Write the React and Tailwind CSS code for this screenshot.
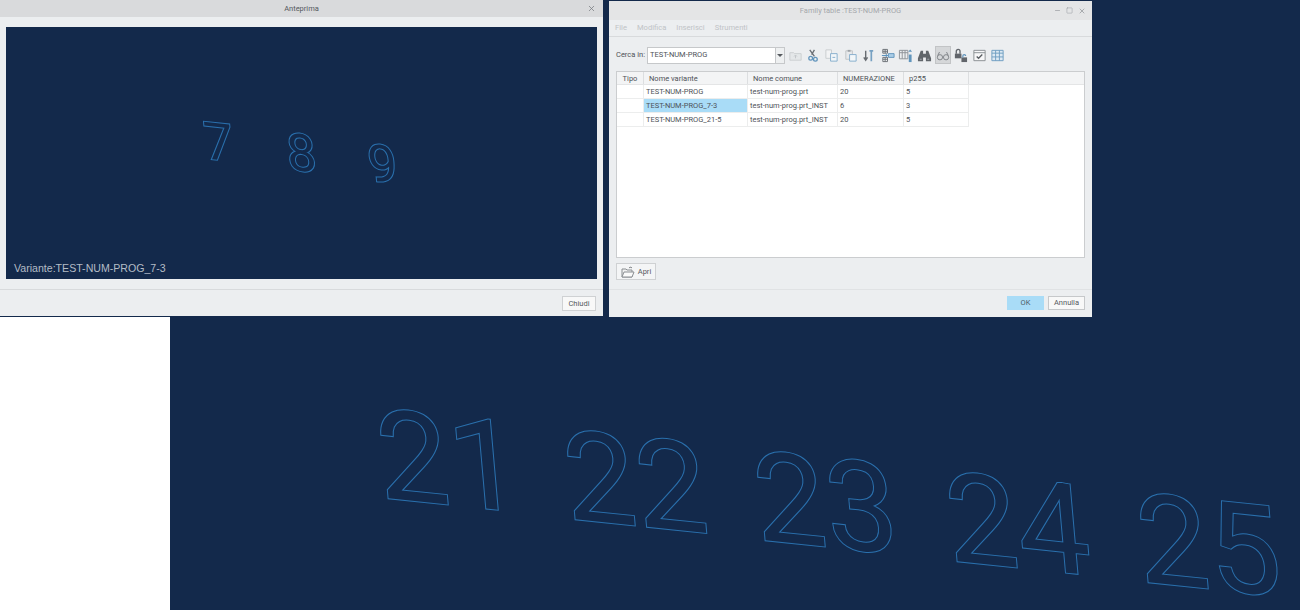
import { X, Minus, Square } from "lucide-react";

// paint-order hides the inner half of the stroke, only the outline stays visible
const outlineBig = "absolute leading-[0.8] whitespace-nowrap text-[126px] font-normal skew-x-[5deg] skew-y-[6deg] text-[#13294b] [paint-order:stroke_fill] [-webkit-text-stroke:2px_#2a70ad] font-['Roboto',sans-serif]";
const outlineSmall = "absolute leading-none text-[52px] font-normal skew-x-[5deg] skew-y-[6deg] text-[#13294b] [paint-order:stroke_fill] [-webkit-text-stroke:2px_#2a70ad] font-['Roboto',sans-serif]";

const columns = ["w-[27px]", "w-[104px]", "w-[90px]", "w-[66px]", "w-[65px]"];

const rows = [
  ["TEST-NUM-PROG", "test-num-prog.prt", "20", "5"],
  ["TEST-NUM-PROG_7-3", "test-num-prog.prt_INST", "6", "3"],
  ["TEST-NUM-PROG_21-5", "test-num-prog.prt_INST", "20", "5"],
];

// toolbar drawings, 16x16
const ToolIcon = ({ children, active }) => (
  <div className={`flex h-[18px] w-4 items-center justify-center ${active ? "bg-[#d5d7d9] border border-[#c2c4c6]" : ""}`}>
    <svg width="15" height="15" viewBox="0 0 16 16" fill="none" className="opacity-80">{children}</svg>
  </div>
);

const Toolbar = () => (
  <div className="ml-[2px] flex items-center gap-[2.450px]">
    <ToolIcon>
      <path d="M2 5h4l1 1h7v7H2z" fill="#e3e6e8" stroke="#c3c7ca" />
      <path d="M8 11V8M6.500 9L8 7.500 9.500 9" stroke="#b5babe" />
    </ToolIcon>
    <ToolIcon>
      <path d="M4 2l5 7M9 2L6 7" stroke="#4a5057" strokeWidth="1.400" />
      <circle cx="5" cy="11" r="2" stroke="#3f7fb0" strokeWidth="1.400" />
      <circle cx="10" cy="12" r="2" stroke="#3f7fb0" strokeWidth="1.400" />
    </ToolIcon>
    <ToolIcon>
      <path d="M2 2h6v9H2z" fill="#f4f5f6" stroke="#c0c4c7" />
      <path d="M7 6h7v8H7z" fill="#f4f8fb" stroke="#6c9ec4" />
      <path d="M9 10h3" stroke="#6c9ec4" />
    </ToolIcon>
    <ToolIcon>
      <path d="M3 3h7v9H3z" fill="#e6e8ea" stroke="#b6babd" />
      <path d="M5 2h3v2H5z" fill="#8b9095" />
      <path d="M7 7h7v7H7z" fill="#f4f8fb" stroke="#6c9ec4" />
    </ToolIcon>
    <ToolIcon>
      <path d="M5 3v10M3 10l2 3 2-3" stroke="#474c52" strokeWidth="1.500" />
      <path d="M11 14V3M9 3h4" stroke="#5b8fb8" strokeWidth="1.800" />
    </ToolIcon>
    <ToolIcon>
      <path d="M3 1.500h5v4H3zM3 10h5v4.500H3zM3 3.500h5M5.500 1.500v4M3 12h5M5.500 10v4.500" stroke="#4c5157" />
      <path d="M9 6h6v4H9z" fill="#9cc7e6" stroke="#3f7fb0" />
      <path d="M2 8h6M6 6.500L8 8l-2 1.500" stroke="#2f75ad" />
    </ToolIcon>
    <ToolIcon>
      <path d="M1.500 2.500h9v9h-9zM4.500 2.500v9M7.500 2.500v9M1.500 5h9" stroke="#777c82" />
      <path d="M13 7v8" stroke="#3f7fb0" strokeWidth="3" />
      <path d="M11 4l2-2.500L15 4z" fill="#3f7fb0" />
    </ToolIcon>
    <ToolIcon>
      <path d="M4 3h2.500v3h3V3H12l3 8v3H9.500v-4h-3v4H1v-3z" fill="#3e4349" />
      <path d="M3 12h2M11 12h2" stroke="#9a9fa4" />
    </ToolIcon>
    <ToolIcon active>
      <circle cx="4.500" cy="10" r="3" stroke="#62676d" />
      <circle cx="11.500" cy="10" r="3" stroke="#62676d" />
      <path d="M7.500 10h1M2 8l2-4M14 8l-2-4" stroke="#62676d" />
    </ToolIcon>
    <ToolIcon>
      <path d="M2 6h7v5H2z" fill="#3f444a" />
      <path d="M3.500 6V3.500a2 2 0 0 1 4 0V6" stroke="#3f444a" strokeWidth="1.400" />
      <path d="M9 10h6v5H9z" fill="#3f444a" />
      <path d="M10.500 10V8.500a1.500 1.500 0 0 1 3 0" stroke="#3f7fb0" strokeWidth="1.300" />
    </ToolIcon>
    <ToolIcon>
      <path d="M2 2.500h12v11H2z" fill="#fafafa" stroke="#72777c" />
      <path d="M2 5h12" stroke="#72777c" />
      <path d="M5 9l2 2 4-4" stroke="#34393e" strokeWidth="1.400" />
    </ToolIcon>
    <ToolIcon>
      <path d="M2 2.500h12v11H2z" fill="#d9e9f4" stroke="#4f8ab6" />
      <path d="M2 5.500h12M6 2.500v11M10 2.500v11M2 9.500h12" stroke="#4f8ab6" />
    </ToolIcon>
  </div>
);

const PreviewWindow = () => (
  <div className="flex h-[316px] w-[603px] shrink-0 flex-col bg-[#eceef0]">
    <div className="relative flex h-[17px] shrink-0 items-center justify-center bg-[#d9dadc] text-[7.500px] text-[#55595e]">
      Anteprima
      <X size={9} strokeWidth={2} className="absolute right-[7px] text-[#777b80]" />
    </div>
    <div className="px-[6px] pt-[10px]">
      <div className="relative h-[252px] overflow-hidden bg-[#13294b]">
        <span className={`${outlineSmall} left-[198px] top-[90px]`}>7</span>
        <span className={`${outlineSmall} left-[281px] top-[101px]`}>8</span>
        <span className={`${outlineSmall} left-[362px] top-[112px]`}>9</span>
        <span className="absolute bottom-[3px] left-[8px] font-['Liberation_Sans',sans-serif] text-[10.600px] leading-[15px] text-[#b4bcc6]">
          Variante:TEST-NUM-PROG_7-3
        </span>
      </div>
    </div>
    <div className="mt-[10px] flex flex-1 items-start justify-end border-t border-[#d8dadc] pr-[7px] pt-[6px]">
      <button className="h-[15px] w-[34px] border border-[#cfd1d3] bg-[#f8f8f8] text-[7.500px] leading-none text-[#55595e]">Chiudi</button>
    </div>
  </div>
);

const FamilyWindow = () => (
  <div className="mt-px ml-[6px] flex h-[316px] w-[483px] shrink-0 flex-col bg-[#eceef0]">
    <div className="relative flex h-[19px] shrink-0 items-center justify-center bg-[#e4e5e6] text-[7.500px] text-[#a4a8ac]">
      Family table :TEST-NUM-PROG
      <div className="absolute right-[6px] flex items-center gap-[5px] text-[#8a8e92]">
        <Minus size={7} strokeWidth={2} />
        <Square size={7} strokeWidth={1.500} />
        <X size={8} strokeWidth={2} />
      </div>
    </div>
    <div className="flex h-[17px] shrink-0 items-center gap-[10px] border-b border-[#d8dadc] pl-[6px] text-[7.600px] text-[#c0c3c6]">
      <span>File</span>
      <span>Modifica</span>
      <span>Inserisci</span>
      <span>Strumenti</span>
    </div>
    <div className="flex h-[18px] mt-[9px] shrink-0 items-center pl-[7px]">
      <span className="w-[31px] whitespace-nowrap text-[7.500px] text-[#4e5257]">Cerca in:</span>
      <div className="flex h-[17px] w-[138px] items-center justify-between border border-[#c6c8ca] bg-white pl-[2px] text-[7.500px] text-[#4e5257]">
        TEST-NUM-PROG
        <div className="flex h-full w-[9px] items-center justify-center border-l border-[#c6c8ca] bg-[#eef0f1]">
          <div className="h-0 w-0 border-x-[3px] border-t-[3px] border-x-transparent border-t-[#55595e]" />
        </div>
      </div>
      <Toolbar />
    </div>
    <div className="mx-[7px] mt-[7px] h-[187px] shrink-0 border border-[#cbcdcf] bg-white text-[7.500px] text-[#4e5257]">
      <div className="flex h-[13px] items-center whitespace-nowrap border-b border-[#e4e5e6] bg-[#f3f4f5]">
        <div className={`${columns[0]} h-full border-r border-[#dcdee0] text-center leading-[13px]`}>Tipo</div>
        <div className={`${columns[1]} h-full border-r border-[#dcdee0] pl-[5px] leading-[13px]`}>Nome variante</div>
        <div className={`${columns[2]} h-full border-r border-[#dcdee0] pl-[5px] leading-[13px]`}>Nome comune</div>
        <div className={`${columns[3]} h-full border-r border-[#dcdee0] pl-[5px] leading-[13px]`}>NUMERAZIONE</div>
        <div className={`${columns[4]} h-full border-r border-[#dcdee0] pl-[5px] leading-[13px]`}>p255</div>
      </div>
      {rows.map((row, i) => (
        <div key={row[0]} className="flex h-[14px] w-[352px] whitespace-nowrap border-b border-[#eceded]">
          <div className={`${columns[0]} border-r border-[#eceded]`} />
          <div className={`${columns[1]} border-r border-[#eceded] pl-[2px] leading-[13px] ${i === 1 ? "bg-[#a9dcf7]" : ""}`}>{row[0]}</div>
          <div className={`${columns[2]} border-r border-[#eceded] pl-[2px] leading-[13px]`}>{row[1]}</div>
          <div className={`${columns[3]} border-r border-[#eceded] pl-[2px] leading-[13px]`}>{row[2]}</div>
          <div className={`${columns[4]} border-r border-[#eceded] pl-[2px] leading-[13px]`}>{row[3]}</div>
        </div>
      ))}
    </div>
    <div className="ml-[7px] mt-[5px] flex h-[17px] w-[40px] shrink-0 items-center justify-center gap-[3px] border border-[#cfd1d3] bg-[#f4f5f6] text-[7.500px] text-[#55595e]">
      <svg width="14" height="12" viewBox="0 0 14 12" fill="none">
        <path d="M1 3h4l1 1h5v7H1z" fill="#f0f0f0" stroke="#8a8e92" />
        <path d="M1 11l2-5h10l-2 5z" fill="#fafafa" stroke="#8a8e92" />
        <path d="M8 2c1-1 2-1 3 0" stroke="#6a6e72" />
      </svg>
      Apri
    </div>
    <div className="mt-[9px] flex flex-1 items-start justify-end gap-[4px] border-t border-[#e0e2e4] pr-[7px] pt-[6px] text-[7.500px]">
      <button className="h-[14px] w-[37px] bg-[#a9dcf7] leading-none text-[#4e5c68]">OK</button>
      <button className="h-[14px] w-[37px] border border-[#c6c8ca] bg-[#f8f8f8] leading-none text-[#55595e]">Annulla</button>
    </div>
  </div>
);

export default function App() {
  return (
    <div className="flex h-[610px] w-[1300px] flex-col overflow-hidden bg-[#13294b] font-['Roboto',sans-serif]">
      <div className="flex h-[317px] shrink-0 items-start">
        <PreviewWindow />
        <FamilyWindow />
      </div>
      <div className="flex flex-1">
        <div className="w-[170px] shrink-0 bg-white" />
        <div className="relative flex-1">
          <span className={`${outlineBig} left-[208px] top-[95px]`}>21</span>
          <span className={`${outlineBig} left-[395px] top-[116px]`}>22</span>
          <span className={`${outlineBig} left-[585px] top-[137px]`}>23</span>
          <span className={`${outlineBig} left-[777px] top-[158px]`}>24</span>
          <span className={`${outlineBig} left-[968px] top-[179px]`}>25</span>
        </div>
      </div>
    </div>
  );
}
